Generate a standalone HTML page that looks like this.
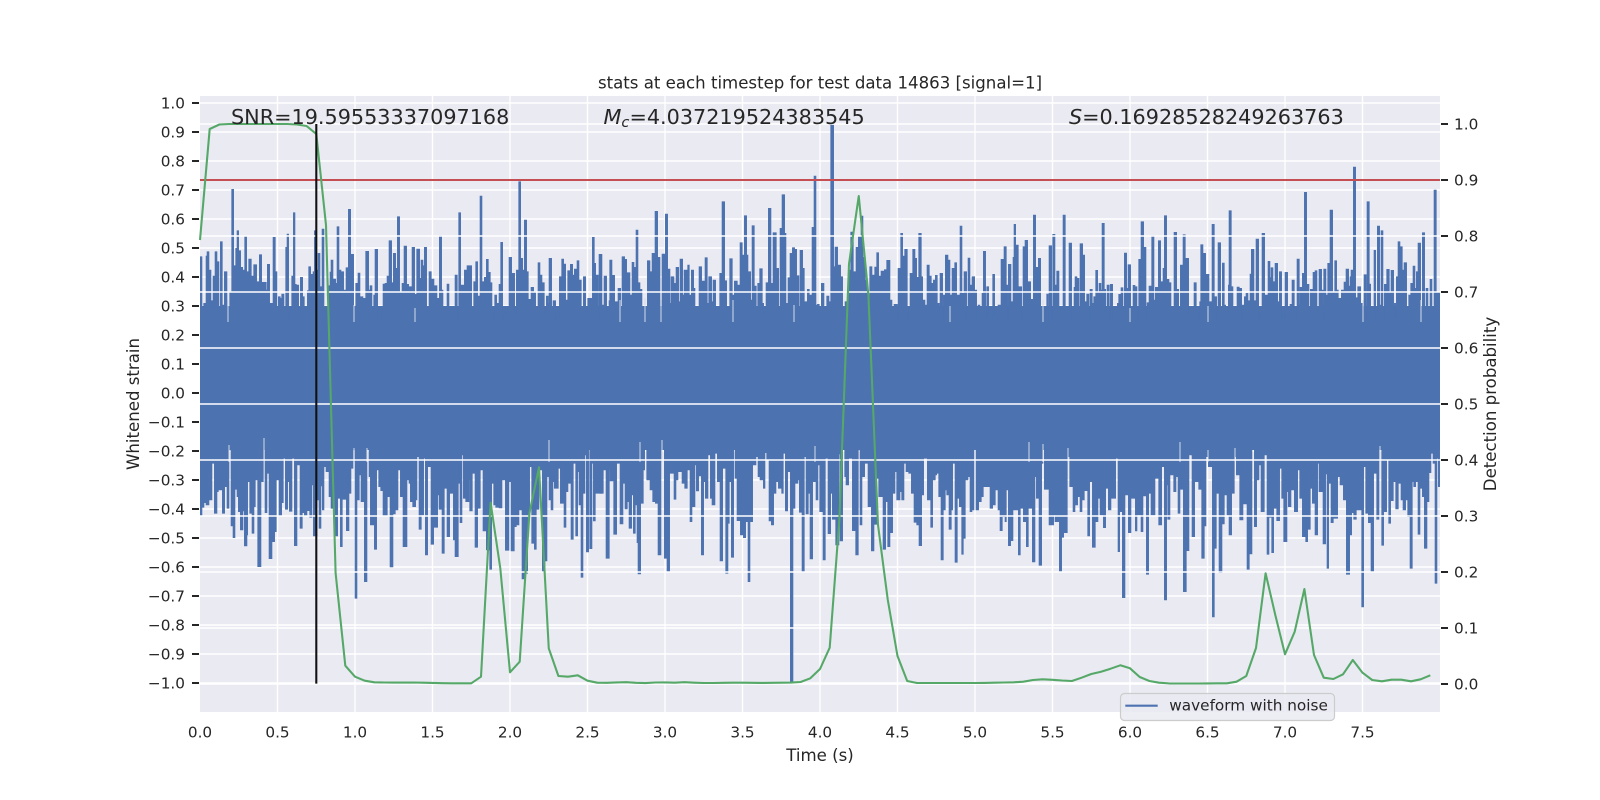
<!DOCTYPE html>
<html>
<head>
<meta charset="utf-8">
<title>stats at each timestep</title>
<style>
html,body{margin:0;padding:0;background:#fff;width:1600px;height:800px;overflow:hidden}
svg{display:block}
text{font-family:"DejaVu Sans","Liberation Sans",sans-serif;fill:#262626}
.t{font-size:15.28px}
.l{font-size:16.6px}
.a{font-size:20.76px}
</style>
</head>
<body>
<svg width="1600" height="800" viewBox="0 0 1600 800" xmlns="http://www.w3.org/2000/svg">
<defs><clipPath id="c"><rect x="200" y="96" width="1240" height="616"/></clipPath></defs>
<rect x="200" y="96" width="1240" height="616" fill="#eaeaf2"/>
<!-- left axis grid -->
<path fill="none" stroke="#fff" stroke-width="1.4" d="M200 103H1440M200 132H1440M200 161H1440M200 190H1440M200 219H1440M200 248H1440M200 277H1440M200 306H1440M200 335H1440M200 364H1440M200 393H1440M200 422H1440M200 451H1440M200 480H1440M200 509H1440M200 538H1440M200 567H1440M200 596H1440M200 625H1440M200 654H1440M200 683H1440"/>
<path fill="none" stroke="#fff" stroke-width="1.4" d="M277.5 96V712M355 96V712M432.5 96V712M510 96V712M587.5 96V712M665 96V712M742.5 96V712M820 96V712M897.5 96V712M975 96V712M1052.5 96V712M1130 96V712M1207.5 96V712M1285 96V712M1362.5 96V712"/>
<!-- waveform -->
<g fill="#4c72b0" stroke="#4c72b0" stroke-width="1.8" clip-path="url(#c)">
<rect x="200" y="306" width="1240" height="144" stroke="none"/>
<path transform="translate(197,170) scale(.33333)" d="M9 450V260H15V415H20V400H27V258H30V245H36V300H42V392H48V318H54V245H60V275H66V420H70V215H76V405H82V305H90V450H98V365H104V58H110V287H116V235H120V182H125V242H131V292H137V300H143V198H149V305H155V267H163V318H170V284H179V335H187V254H194V337H208V360H211V283H218V400H228V202H235V305H240V415H244V380H250V385H254V372H261V415H266V232H270V192H275V450H281V430H284V318H289V128H294V343H298V345H305V430H310V322H317V380H322V430H331V362H335V290H341V313H348V305H352V182H356V300H363V250H369V350H375V177H381V435H387V440H393V347H399V306H402V270H408V327H416V340H420V170H426V300H432V305H440V360H447V293H454V118H461V253H470V410H476V340H483V309H489V380H498V385H506V244H515V360H519V347H525V425H530V375H534V238H542V450H546V410H554V450H558V342H564V340H570V318H576V212H584V338H589V250H596V295H601V140H608V365H615V340H621V228H629V343H635V350H645V232H653V373H659V237H668V325H672V270H678V287H682V232H689V430H696V305H703V327H711V347H720V385H727V197H734V360H738V450H744V430H750V342H756V450H765V445H770V450H774V315H781V450H785V128H791V345H802V300H810V287H824V410H830V335H836V275H842V378H849V78H855V335H862V322H868V268H874V307H880V338H885V450H893V375H899V400H906V343H911V217H917V450H920V440H926V410H932V450H936V262H944V310H953V435H958V300H965V35H971V265H977V300H982V150H989V305H994V388H1002V352H1010V365H1016V410H1023V278H1029V315H1035V338H1042V435H1048V378H1054V400H1056V265H1064V410H1068V392H1076V450H1080V440H1087V320H1094V267H1100V282H1106V390H1112V302H1120V283H1127V315H1132V297H1140V272H1146V330H1153V410H1159V320H1166V425H1172V385H1186V202H1192V280H1196V315H1204V450H1206V253H1215V450Z"/>
<path transform="translate(600,170) scale(.33333)" d="M0 450V253H5V405H12V318H20V430H27V392H29V270H36V316H44V395H54V355H62V440H66V260H74V268H80V308H90V375H96V277H102V292H108V180H114V338H120V358H126V440H136V410H142V272H150V305H156V250H165V124H173V262H180V440H186V252H196V132H203V297H210V400H213V320H222V340H228V292H236V395H240V267H248V375H252V300H263V285H268V375H274V300H281V355H285V420H291V450H297V290H305V333H315V263H322V400H326V320H335V395H339V330H347V420H359V310H366V95H374V332H380V420H389V266H397V375H403V333H412V345H420V218H427V255H433V137H440V255H444V305H452V390H456V167H463V348H469V420H473V340H479V296H487V400H491V440H498V338H505V115H513V340H519V188H529V295H536V440H540V175H546V74H554V190H558V400H564V323H570V250H577V233H584V238H590V317H597V450H600V241H608V295H613V395H622V358H628V375H636V172H642V18H648V405H652V403H658V420H664V340H672V420H680V378H687V395H692V-135H701V290H705V231H713V285H722V320H728V440H735V395H745V300H752V186H760V305H768V232H775V200H783V138H789V262H796V330H803V390H809V290H816V315H824V291H830V248H836V318H843V303H853V299H860V271H870V390H876V430H882V403H892V450H894V295H902V190H908V258H914V238H922V410H926V450H930V310H938V238H945V265H950V322H956V190H964V320H968V390H975V405H981V285H988V318H994V340H1000V330H1006V316H1012V400H1018V450H1020V310H1028V450H1030V375H1036V255H1044V270H1050V375H1056V295H1064V278H1070V375H1080V168H1086V370H1092V305H1100V450H1104V264H1110V345H1116V320H1124V360H1130V450H1134V405H1140V450H1146V370H1150V244H1157V450H1160V350H1166V440H1170V450H1178V313H1184V440H1190V450H1194V405H1203V268H1212V230H1215V450Z"/>
<path transform="translate(1005,170) scale(.33333)" d="M0 450V230H4V345H8V450H10V283H18V395H24V262H27V163H32V225H40V350H50V450H54V230H60V211H68V335H77V388H85V135H92V292H100V265H107V450H125V372H130V450H132V227H140V450H143V193H150V345H155V303H162V425H168V450H174V135H181V450H192V219H200V450H207V352H210V320H216V325H222V450H225V221H233V255H239V450H240V395H245V372H252V450H255V358H262V400H266V380H272V301H278V365H282V340H288V360H291V160H298V358H302V430H306V345H313V450H316V343H323V450H337V400H341V373H348V353H354V450H358V249H365V355H369V284H377V415H384V346H390V350H396V450H401V268H408V155H416V232H423V450H426V398H432V348H440V197H447V390H451V352H459V450H460V212H467V335H474V295H478V137H485V328H492V338H498V450H507V187H515V358H521V420H526V285H534V194H541V265H551V440H556V450H561V412H567V338H574V410H580V450H584V395H587V224H594V250H602V313H612V395H620V450H621V163H628V380H635V450H639V218H647V410H652V279H658V405H662V450H670V345H672V122H679V350H684V450H690V432H696V351H703V355H710V450H712V405H718V380H723V370H729V392H735V312H739V238H747V392H753V207H761V450H763V430H766V450H771V190H779V375H789V274H795V323H798V293H804V335H810V280H818V395H823V305H830V450H832V430H838V450H840V307H848V415H855V403H860V450H861V330H868V415H873V450H876V267H883V405H885V352H892V310H898V67H905V343H912V450H916V358H923V450H924V307H930V302H936V440H942V298H950V360H955V450H956V297H963V375H968V280H975V120H983V365H989V272H995V360H1000V385H1009V360H1017V336H1023V297H1031V348H1035V320H1038V300H1045V-9H1052V383H1058V350H1067V400H1072V450H1077V314H1084V450H1086V95H1093V342H1097V450H1107V241H1112V450H1117V168H1124V405H1128V182H1134V450H1138V343H1145V298H1153V365H1158V301H1166V450H1168V400H1172V450H1174V320H1179V215H1185V230H1192V300H1197V278H1205V415H1211V375H1217V340H1224V288H1230V355H1234V305H1239V219H1247V450H1252V188H1259V410H1263V355H1269V410H1275V328H1281V445H1287V60H1294V367H1305V450Z"/>
<path transform="translate(197,430) scale(.33333)" d="M9 0V258H15V232H21V218H27V225H36V210H45V100H52V250H60V185H64V180H76V250H83V170H90V235H96V60H102V288H108V323H114V178H120V200H124V245H130V300H138V243H142V348H150V315H152V155H158V250H165V310H171V230H175V150H182V410H192V155H199V25H204V248H210V130H216V386H225V335H233V305H238V150H246V258H254V218H259V85H265V238H272V155H277V244H285V85H292V347H300V105H309V295H316V248H322V258H330V242H338V262H345V165H349V318H360V210H366V295H372V168H376V240H381V110H387V125H396V200H402V235H412V318H422V205H430V350H436V208H448V302H456V190H462V115H468V60H474V505H480V210H487V135H492V215H502V455H510V58H516V140H520V285H532V358H539V120H545V170H551V182H558V257H571V200H579V411H588V252H595V240H603V120H610V200H618V350H630V150H636V160H640V215H647V230H656V210H660V80H666V298H673V255H680V85H685V375H692V110H702V343H710V292H722V195H726V238H735V370H742V175H750V320H758V190H769V330H774V380H784V160H789V278H795V75H799V205H806V215H816V150H818V243H826V130H834V352H842V235H850V120H858V303H868V360H878V418H884V160H890V225H896V232H906V234H915V150H925V361H936V155H942V363H952V290H958V285H966V240H975V447H984V430H992V260H998V110H1004V340H1012V358H1018V238H1026V120H1036V425H1044V393H1050V140H1056V210H1062V240H1068V155H1072V175H1084V115H1090V220H1101V292H1107V185H1113V160H1122V328H1129V100H1136V318H1142V125H1146V225H1152V442H1158V190H1164V75H1168V366H1175V55H1178V356H1185V100H1189V273H1195V190H1215V0Z"/>
<path transform="translate(600,430) scale(.33333)" d="M0 0V190H10V120H18V385H28V118H30V153H41V313H50V100H60V282H69V160H75V237H82V215H87V295H95V195H100V310H106V225H111V338H114V432H122V220H130V120H134V50H140V150H150V180H158V215H166V220H174V375H183V30H193V385H201V425H209V130H222V208H228V150H234V125H246V160H254V175H262V120H270V275H276V230H285V105H289V183H296V138H304V375H311V155H316V205H324V75H331V205H336V225H345V70H352V155H360V393H368V115H377V430H384V280H388V155H394V382H401V55H405V145H411V272H421V315H430V323H437V275H444V455H450V275H458V105H468V80H474V140H480V150H490V175H495V68H500V90H507V273H514V285H521V190H528V155H535V175H545V190H550V70H556V243H563V125H571V759H579V235H585V160H594V150H598V247H606V425H613V80H618V252H625V190H630V387H638V155H648V210H654V105H659V245H669V390H676V85H684V311H692V190H697V268H707V345H717V72H720V333H728V50H734V140H738V165H746V85H757V302H767V375H775V60H780V285H786V140H794V100H804V230H814V363H822V283H830V145H836V200H849V358H857V215H863V350H870V308H878V190H885V125H890V210H900V185H905V210H912V100H918V125H926V130H934V190H942V277H950V285H957V347H965V195H971V85H982V210H992V292H998V150H1006V135H1010V130H1016V200H1023V390H1030V240H1036V180H1040V195H1047V298H1054V240H1058V100H1065V397H1072V205H1078V230H1085V373H1090V325H1096V150H1104V140H1110V245H1116V240H1122V45H1128V240H1136V215H1144V200H1150V170H1170V235H1178V225H1186V180H1194V240H1200V302H1207V260H1215V0Z"/>
<path transform="translate(1005,430) scale(.33333)" d="M0 0V275H4V180H10V347H17V332H24V240H40V375H46V235H55V275H64V350H70V235H82V396H90V140H94V205H102V406H110V100H114V40H118V178H132V285H146V255H150V275H163V425H170V322H176V308H187V80H194V170H204V245H210V225H218V200H225V245H231V210H238V182H248V318H254V155H262V352H271V275H279V205H285V255H295V293H302V175H310V240H318V205H332V85H339V365H344V245H352V503H360V195H370V308H378V205H391V303H396V255H408V305H414V198H424V433H431V190H438V255H450V145H461V285H470V110H478V510H485V165H488V268H495V135H506V185H513V140H519V250H525V178H535V485H544V362H552V75H561V320H569V155H581V178H590V385H598V288H603V80H610V110H622V561H628V355H634V190H642V428H651V282H658V195H666V255H672V315H680V190H688V80H694V135H704V270H714V222H726V418H733V372H741V45H748V290H755V150H762V105H768V245H778V75H786V373H792V262H800V368H806V235H815V272H824V115H830V205H836V335H846V185H850V230H858V180H868V245H878V120H884V205H892V320H902V335H908V298H916V175H922V220H930V315H938V100H942V185H954V342H962V132H966V415H971V160H978V278H985V265H998V140H1005V165H1015V210H1024V433H1034V315H1040V248H1046V268H1054V240H1070V531H1076V110H1082V250H1090V278H1098V425H1106V130H1115V268H1122V50H1130V346H1136V245H1145V90H1151V280H1157V212H1165V155H1172V237H1180V160H1188V210H1194V240H1202V210H1208V260H1215V415H1222V155H1226V170H1232V155H1239V313H1245V175H1252V200H1258V355H1266V215H1272V128H1278V70H1284V100H1290V460H1296V85H1300V170H1304V0Z"/>
</g>
<!-- thin light gaps inside the waveform band -->
<path fill="none" stroke="#d5dcea" stroke-width="1" d="M228 300V322M354 305V322M415 308V322M620 300V322M645 298V322M661 300V322M733 300V322M794 305V322M950 306V322M1043 300V322M1130 308V322M1208 306V322M1363 300V322M1421 300V322"/>
<path fill="none" stroke="#d5dcea" stroke-width="1" d="M229 445V462M264 438V460M354 448V462M367 448V462M549 440V462M640 442V462M662 440V462M815 446V462M1029 442V462M1043 444V462M1068 448V462M1180 442V462M1208 450V462M1235 448V462M1380 446V462"/>
<!-- right axis grid -->
<path fill="none" stroke="#fff" stroke-width="1.4" d="M200 124H1440M200 180H1440M200 236H1440M200 292H1440M200 348H1440M200 404H1440M200 460H1440M200 516H1440M200 572H1440M200 628H1440M200 684H1440"/>
<!-- threshold, probability, marker -->
<path d="M200 180H1440" stroke="#c44e52" stroke-width="2.08" fill="none"/>
<polyline fill="none" stroke="#55a868" stroke-width="2.08" stroke-linejoin="round" points="200,240 209.7,129 219.4,124.5 229,124 238.8,124 248.4,124 258,124 267.8,124 277.5,124 287.2,124 296.9,124.5 306.6,126 316.3,134 326,225 335.6,573 345.3,665.7 355,676.7 364.7,680.7 374.4,682.3 384,682.5 393.8,682.6 403.4,682.6 413.1,682.5 422.8,682.7 432.5,682.9 442.2,683.2 451.9,683.3 461.6,683.3 471.25,683.3 481,676.7 490.6,502.7 500.3,568.3 510,672.3 519.7,661.7 529.4,513.3 539,467.3 548.75,648.3 558.4,676 568,676.7 577.8,675.3 587.5,680.7 597.2,682.7 606.9,682.8 616.6,682.4 626.3,682.2 636,682.8 645.6,683.1 655.3,682.5 665,682.4 674.7,682.7 684.4,682.2 694,682.7 703.8,683 713.4,683 723.1,682.8 732.8,682.7 742.5,682.7 752.2,682.8 761.9,682.9 771.6,682.8 781.3,682.7 791,682.6 800.6,682 810.3,678.3 820,669 829.7,647.7 839.4,519 849,264 858.75,196 868.4,295 878,525 887.8,600 897.5,656 907.2,681 917,683 926.6,683 936.25,683 946,683 955.6,683 965.3,683 975,683 984.7,682.9 994.4,682.7 1004.1,682.5 1013.8,682.3 1023.4,681.7 1033,680 1042.8,679.3 1052.5,679.8 1062,680.5 1071.9,681 1081.6,677.7 1091.3,674 1101,671.7 1110.6,668.7 1120.3,665.3 1130,668.3 1139.7,677 1149.4,681 1159,682.7 1168.75,683.4 1178.4,683.5 1188.1,683.5 1197.8,683.5 1207.5,683.4 1217.2,683.3 1226.9,683.3 1236.6,681.7 1246.25,676 1256,648 1265.6,573.3 1275.3,615 1285,654.3 1294.7,631.7 1304.4,589 1314,655 1323.75,677.7 1333.4,679 1343,674.3 1352.8,660 1362.5,672.7 1372.2,680 1381.9,681.3 1391.6,679.7 1401.25,679.7 1411,681.3 1420.6,679.3 1430.3,675.3"/>
<path d="M316.3 124V683.6" stroke="#111" stroke-width="2.08" fill="none"/>
<!-- tick marks -->
<path fill="none" stroke="#262626" stroke-width="2" d="M192 103H199M192 132H199M192 161H199M192 190H199M192 219H199M192 248H199M192 277H199M192 306H199M192 335H199M192 364H199M192 393H199M192 422H199M192 451H199M192 480H199M192 509H199M192 538H199M192 567H199M192 596H199M192 625H199M192 654H199M192 683H199"/>
<path fill="none" stroke="#262626" stroke-width="2" d="M1441 124H1448M1441 180H1448M1441 236H1448M1441 292H1448M1441 348H1448M1441 404H1448M1441 460H1448M1441 516H1448M1441 572H1448M1441 628H1448M1441 684H1448"/>
<!-- annotations -->
<text class="a" x="231" y="124">SNR=19.59553337097168</text>
<text class="a" x="603.5" y="124"><tspan font-style="italic">M</tspan><tspan font-style="italic" font-size="14.6" dy="3">c</tspan><tspan dy="-3">=4.037219524383545</tspan></text>
<text class="a" x="1069" y="124"><tspan font-style="italic">S</tspan>=0.16928528249263763</text>
<!-- legend -->
<rect x="1120.5" y="693.5" width="214" height="27" rx="4" fill="#eaeaf2" fill-opacity=".85" stroke="#cccccc" stroke-width="1.2"/>
<path d="M1125.3 705.7H1157.7" stroke="#4c72b0" stroke-width="2.08" fill="none"/>
<text class="t" x="1169.3" y="710.7">waveform with noise</text>
<!-- left tick labels -->
<g class="t" text-anchor="end">
<text class="t" x="185" y="108.5">1.0</text>
<text class="t" x="185" y="137.5">0.9</text>
<text class="t" x="185" y="166.5">0.8</text>
<text class="t" x="185" y="195.5">0.7</text>
<text class="t" x="185" y="224.5">0.6</text>
<text class="t" x="185" y="253.5">0.5</text>
<text class="t" x="185" y="282.5">0.4</text>
<text class="t" x="185" y="311.5">0.3</text>
<text class="t" x="185" y="340.5">0.2</text>
<text class="t" x="185" y="369.5">0.1</text>
<text class="t" x="185" y="398.5">0.0</text>
<text class="t" x="185" y="427.5">−0.1</text>
<text class="t" x="185" y="456.5">−0.2</text>
<text class="t" x="185" y="485.5">−0.3</text>
<text class="t" x="185" y="514.5">−0.4</text>
<text class="t" x="185" y="543.5">−0.5</text>
<text class="t" x="185" y="572.5">−0.6</text>
<text class="t" x="185" y="601.5">−0.7</text>
<text class="t" x="185" y="630.5">−0.8</text>
<text class="t" x="185" y="659.5">−0.9</text>
<text class="t" x="185" y="688.5">−1.0</text>
</g>
<!-- right tick labels -->
<text class="t" x="1454" y="129.5">1.0</text>
<text class="t" x="1454" y="185.5">0.9</text>
<text class="t" x="1454" y="241.5">0.8</text>
<text class="t" x="1454" y="297.5">0.7</text>
<text class="t" x="1454" y="353.5">0.6</text>
<text class="t" x="1454" y="409.5">0.5</text>
<text class="t" x="1454" y="465.5">0.4</text>
<text class="t" x="1454" y="521.5">0.3</text>
<text class="t" x="1454" y="577.5">0.2</text>
<text class="t" x="1454" y="633.5">0.1</text>
<text class="t" x="1454" y="689.5">0.0</text>
<!-- bottom tick labels -->
<g text-anchor="middle">
<text class="t" x="200" y="737.5">0.0</text>
<text class="t" x="277.5" y="737.5">0.5</text>
<text class="t" x="355" y="737.5">1.0</text>
<text class="t" x="432.5" y="737.5">1.5</text>
<text class="t" x="510" y="737.5">2.0</text>
<text class="t" x="587.5" y="737.5">2.5</text>
<text class="t" x="665" y="737.5">3.0</text>
<text class="t" x="742.5" y="737.5">3.5</text>
<text class="t" x="820" y="737.5">4.0</text>
<text class="t" x="897.5" y="737.5">4.5</text>
<text class="t" x="975" y="737.5">5.0</text>
<text class="t" x="1052.5" y="737.5">5.5</text>
<text class="t" x="1130" y="737.5">6.0</text>
<text class="t" x="1207.5" y="737.5">6.5</text>
<text class="t" x="1285" y="737.5">7.0</text>
<text class="t" x="1362.5" y="737.5">7.5</text>
<text class="l" x="820" y="761">Time (s)</text>
<text class="l" x="820" y="88.5">stats at each timestep for test data 14863 [signal=1]</text>
<text class="l" transform="translate(139,404) rotate(-90)">Whitened strain</text>
<text class="l" transform="translate(1496,404) rotate(-90)">Detection probability</text>
</g>
</svg>
</body>
</html>
